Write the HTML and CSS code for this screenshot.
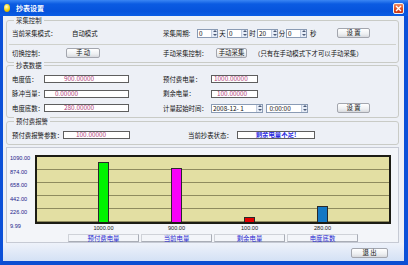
FILE: index.html
```html
<!DOCTYPE html>
<html lang="zh-CN">
<head>
    <meta charset="UTF-8">
    <title>抄表设置</title>
    <link rel="stylesheet" href="styles.css">
</head>
<body>
    <div class="window">
        <div class="titlebar">
            <span class="app-icon"></span>
            <span class="title">抄表设置</span>
            <span class="close">
                <svg width="7" height="7" viewBox="0 0 7 7"><path d="M1 1L6 6M6 1L1 6" stroke="#fff" stroke-width="1.4"/></svg>
            </span>
        </div>

        <div class="client">
            <!-- 采集控制 -->
            <div class="group g-collect">
                <span class="group-title">采集控制</span>
                <div class="row r12">
                    <span class="w60">当前采集模式：</span>
                    <span class="w91">自动模式</span>
                    <span class="w34">采集周期:</span>
                    <span class="spin w21"><span class="val">0</span><span class="arrows"><i class="up"></i><i class="down"></i></span></span>
                    <span class="unit w9">天</span>
                    <span class="spin w21"><span class="val">0</span><span class="arrows"><i class="up"></i><i class="down"></i></span></span>
                    <span class="unit w9">时</span>
                    <span class="spin w21"><span class="val">20</span><span class="arrows"><i class="up"></i><i class="down"></i></span></span>
                    <span class="unit w8">分</span>
                    <span class="spin w21"><span class="val">0</span><span class="arrows"><i class="up"></i><i class="down"></i></span></span>
                    <span class="sec">秒</span>
                    <button class="btn w33">设 置</button>
                </div>
                <div class="sep"></div>
                <div class="row r12">
                    <span class="w54">切换控制：</span>
                    <button class="btn w34">手 动</button>
                    <span class="w63"></span>
                    <span class="w53">手动采集控制：</span>
                    <button class="btn w31">手动采集</button>
                    <span class="hint">（只有在手动模式下才可以手动采集）</span>
                </div>
            </div>

            <!-- 抄表数据 -->
            <div class="group g-data">
                <span class="group-title">抄表数据</span>
                <div class="row">
                    <span class="w32">电度值：</span>
                    <span class="field w85 pad19">900.00000</span>
                    <span class="w34"></span>
                    <span class="w48">预付费电量：</span>
                    <span class="field w47 pad2">1000.00000</span>
                </div>
                <div class="row">
                    <span class="w32">脉冲当量：</span>
                    <span class="field w85 pad10">0.00000</span>
                    <span class="w34"></span>
                    <span class="w48">剩余电量：</span>
                    <span class="field w47 pad5">100.00000</span>
                </div>
                <div class="row">
                    <span class="w32">电度底数：</span>
                    <span class="field w85 pad19">280.00000</span>
                    <span class="w34"></span>
                    <span class="w48">计量起始时间：</span>
                    <span class="spin w52"><span class="val">2008-12- 1</span><span class="arrows"><i class="up"></i><i class="down"></i></span></span>
                    <span class="spin w42 ml3"><span class="val">&nbsp;0:00:00</span><span class="arrows"><i class="up"></i><i class="down"></i></span></span>
                    <span class="w29"></span>
                    <button class="btn w33">设 置</button>
                </div>
            </div>

            <!-- 预付费报警 -->
            <div class="group g-alarm">
                <span class="group-title">预付费报警</span>
                <div class="row">
                    <span class="w51">预付费报警参数：</span>
                    <span class="field w67 pad12">100.00000</span>
                    <span class="w58"></span>
                    <span class="w49">当前抄表状态：</span>
                    <span class="field status w78">剩余电量不足!</span>
                </div>
            </div>

            <!-- 图表 -->
            <div class="chart-panel">
                <div class="axis">
                    <span>1090.00</span>
                    <span>874.00</span>
                    <span>658.00</span>
                    <span>442.00</span>
                    <span>226.00</span>
                    <span>9.99</span>
                </div>
                <div class="plot-wrap">
                    <div class="plot">
                        <div class="bars">
                            <div class="bar-col"><div class="bar green" style="height:91.67%"></div></div>
                            <div class="bar-col"><div class="bar magenta" style="height:82.41%"></div></div>
                            <div class="bar-col"><div class="bar red" style="height:8.33%"></div></div>
                            <div class="bar-col"><div class="bar blue" style="height:25.0%"></div></div>
                        </div>
                    </div>
                    <div class="values">
                        <span>1000.00</span>
                        <span>900.00</span>
                        <span>100.00</span>
                        <span>280.00</span>
                    </div>
                    <div class="cats">
                        <span>预付费电量</span>
                        <span>当前电量</span>
                        <span>剩余电量</span>
                        <span>电度底数</span>
                    </div>
                </div>
            </div>

            <div class="footer">
                <button class="btn exit">退 出</button>
            </div>
        </div>
    </div>
</body>
</html>
```

FILE: styles.css
```css
* {
    box-sizing: border-box;
}
body {
    margin: 0;
    width: 408px;
    height: 265px;
    overflow: hidden;
    font-family: "Noto Sans CJK SC", "Liberation Sans", sans-serif;
    font-size: 6.4px;
    color: #111;
    background: #fff;
}
.window {
    width: 408px;
    height: 265px;
    display: flex;
    flex-direction: column;
}

/* title bar */
.titlebar {
    height: 16px;
    flex: none;
    display: flex;
    align-items: center;
    padding: 0 4px 0 4px;
    background: linear-gradient(#3a86f4, #0b5be2 25%, #0653dc 70%, #0a5ce4);
}
.app-icon {
    width: 6px;
    height: 8px;
    border-radius: 50%;
    background: radial-gradient(circle at 40% 35%, #fffbd0, #f5d400 55%, #c08a00);
}
.title {
    margin-left: 6px;
    color: #fff;
    font-size: 7px;
    font-weight: bold;
}
.close {
    margin-left: auto;
    width: 11px;
    height: 11px;
    border: 1px solid #f2f2f2;
    border-radius: 2px;
    background: linear-gradient(#f08a62, #dc4a1e 60%, #c8381a);
    display: flex;
    align-items: center;
    justify-content: center;
}

/* client area */
.client {
    flex: 1;
    display: flex;
    flex-direction: column;
    border-left: 3px solid #0b50d8;
    border-right: 4px solid #0b50d8;
    border-bottom: 4px solid #0b4ed2;
    background: #edf0f6;
}
.group {
    position: relative;
    flex: none;
    margin: 0 5px 0 3px;
    border: 1px solid #c9cbc6;
    border-radius: 3px;
    padding-left: 5px;
}
.group-title {
    position: absolute;
    top: -5px;
    left: 7px;
    padding: 0 2px;
    line-height: 9px;
    background: #edf0f6;
    color: #222;
}
.g-collect {
    margin-top: 4px;
    height: 43px;
    padding-top: 6px;
}
.g-data {
    margin-top: 2px;
    height: 53px;
    padding-top: 8px;
    display: flex;
    flex-direction: column;
    gap: 4.5px;
}
.g-alarm {
    margin-top: 3px;
    height: 24px;
    padding-top: 8px;
}
.sep {
    margin: 5px 2px 2px -3px;
    height: 1px;
    background: #cfd1cc;
}

.row {
    display: flex;
    align-items: center;
    height: 10px;
    white-space: nowrap;
}
.row.r12 {
    height: 12px;
}
.row > span {
    flex: none;
}

.w8 { width: 8px; }
.w9 { width: 9px; }
.w21 { width: 21px; }
.w29 { width: 29px; }
.w31 { width: 31px; }
.w32 { width: 32px; }
.w33 { width: 33px; }
.w34 { width: 34px; }
.w42 { width: 42px; }
.w47 { width: 47px; }
.w48 { width: 48px; }
.w49 { width: 49px; }
.w51 { width: 51px; }
.w52 { width: 52px; }
.w53 { width: 53px; }
.w54 { width: 54px; }
.w58 { width: 58px; }
.w60 { width: 60px; }
.w63 { width: 63px; }
.w67 { width: 67px; }
.w78 { width: 78px; }
.w85 { width: 85px; }
.w91 { width: 91px; }
.ml3 { margin-left: 3px; }

.unit {
    text-align: center;
}
.sec {
    width: 30px;
    padding-left: 3px;
}
.hint {
    margin-left: 7px;
}

/* inputs */
.field {
    height: 8px;
    line-height: 6px;
    border: 1px solid #5e5e5e;
    background: #fff;
    color: #b23a78;
    overflow: hidden;
}
.pad2 { padding-left: 2px; }
.pad5 { padding-left: 5px; }
.pad10 { padding-left: 10px; }
.pad12 { padding-left: 12px; }
.pad19 { padding-left: 19px; }
.field.status {
    color: #2a2ae0;
    text-align: center;
    font-weight: bold;
}

.spin {
    display: flex;
    height: 9px;
    border: 1px solid #8a9bb4;
    background: #fff;
    overflow: hidden;
}
.spin .val {
    flex: 1;
    padding-left: 1px;
    line-height: 7px;
}
.spin .arrows {
    width: 6px;
    display: flex;
    flex-direction: column;
    justify-content: space-around;
    align-items: center;
    border-left: 1px solid #c2cde0;
    background: #e6ecf6;
}
.spin i {
    width: 0;
    height: 0;
    border-left: 2px solid transparent;
    border-right: 2px solid transparent;
}
.spin i.up {
    border-bottom: 2px solid #4a5a78;
}
.spin i.down {
    border-top: 2px solid #4a5a78;
}

.btn {
    flex: none;
    height: 10px;
    padding: 0;
    border: 1px solid #a3a6ae;
    border-radius: 2px;
    background: linear-gradient(#ffffff, #eef0f2 60%, #d8dade);
    font-family: inherit;
    font-size: 6.4px;
    line-height: 8px;
    color: #111;
}

/* chart */
.chart-panel {
    flex: none;
    display: flex;
    align-items: flex-start;
    height: 96px;
    margin: 2px 5px 0 3px;
    border: 1px solid #c6cad4;
    background: #f3f5f9;
}
.axis {
    width: 28px;
    height: 76px;
    margin-top: 6px;
    padding-left: 3px;
    display: flex;
    flex-direction: column;
    justify-content: space-between;
    line-height: 8px;
    font-family: "Liberation Sans", sans-serif;
    font-size: 5.6px;
    color: #23238a;
}
.plot-wrap {
    width: 356px;
    margin-top: 7px;
}
.plot {
    height: 69px;
    border: 2px solid #1c1c14;
    background-color: #e3dfa3;
    background-image: repeating-linear-gradient(to bottom, transparent 0 12px, #8f8b5e 12px 13px);
}
.bars {
    height: 100%;
    padding: 0 30px;
    display: grid;
    grid-template-columns: repeat(4, 73px);
}
.bar-col {
    display: flex;
    justify-content: center;
    align-items: flex-end;
}
.bar {
    width: 11px;
    border: 1px solid #2a2a2a;
    border-bottom: none;
}
.bar.green { background: #00f400; }
.bar.magenta { background: #f800f8; }
.bar.red { background: #e40000; }
.bar.blue { background: #1478c4; }

.values,
.cats {
    display: grid;
    grid-template-columns: repeat(4, 73px);
    padding-left: 32px;
    text-align: center;
}
.values {
    height: 9px;
    line-height: 9px;
    font-family: "Liberation Sans", sans-serif;
    font-size: 5.6px;
    color: #222;
}
.cats {
    margin-top: 1px;
}
.cats span {
    height: 8px;
    margin: 0 1px;
    line-height: 7px;
    border: 1px solid #cfd2d8;
    border-right-color: #a9adb6;
    border-bottom-color: #a9adb6;
    color: #2626d0;
}

.footer {
    flex: 1;
    display: flex;
    justify-content: flex-end;
    align-items: flex-start;
    padding: 5px 16px 0 0;
    background: linear-gradient(#eef2fa, #d4e1f5);
}
.btn.exit {
    width: 37px;
}
```
